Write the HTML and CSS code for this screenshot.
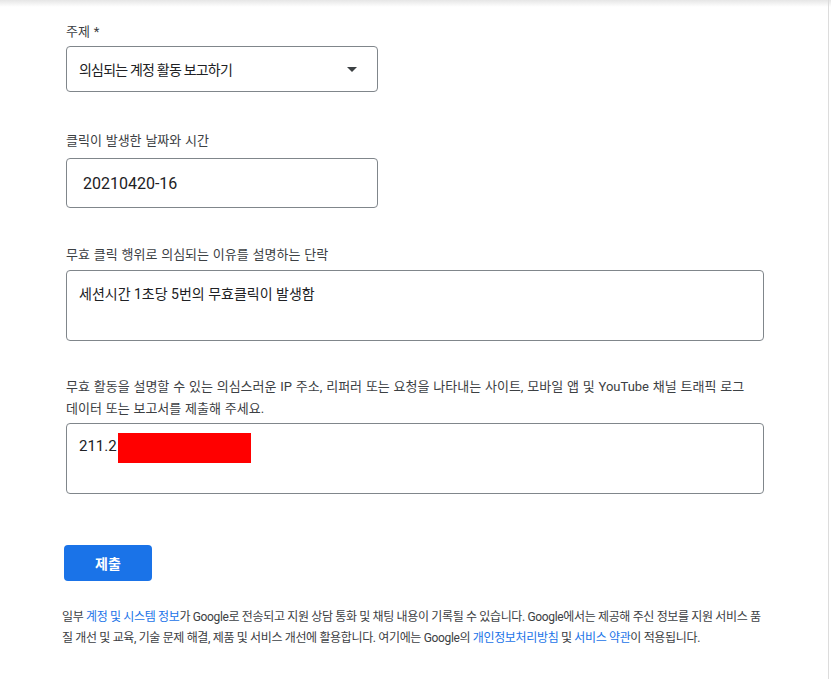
FILE: index.html
```html
<!DOCTYPE html>
<html lang="ko">
<head>
<meta charset="utf-8">
<link rel="stylesheet" href="styles.css">
</head>
<body>
<div class="page">
  <form class="form">
    <div class="field f1">
      <div class="label">주제 *</div>
      <div class="box select">
        <span>의심되는 계정 활동 보고하기</span>
        <svg class="arrow" width="10" height="5" viewBox="0 0 10 5"><path d="M0 0h10L5 5z" fill="#3c4043"/></svg>
      </div>
    </div>
    <div class="field f2">
      <div class="label">클릭이 발생한 날짜와 시간</div>
      <div class="box input">20210420-16</div>
    </div>
    <div class="field f3">
      <div class="label">무효 클릭 행위로 의심되는 이유를 설명하는 단락</div>
      <div class="box area">세션시간 1초당 5번의 무효클릭이 발생함</div>
    </div>
    <div class="field f4">
      <div class="label">무효 활동을 설명할 수 있는 의심스러운 IP 주소, 리퍼러 또는 요청을 나타내는 사이트, 모바일 앱 및 YouTube 채널 트래픽 로그<br>데이터 또는 보고서를 제출해 주세요.</div>
      <div class="box area area2"><span class="ip">211.2</span><span class="redact"></span></div>
    </div>
    <button type="button" class="submit">제출</button>
    <p class="footer">일부 <a>계정 및 시스템 정보</a>가 Google로 전송되고 지원 상담 통화 및 채팅 내용이 기록될 수 있습니다. Google에서는 제공해 주신 정보를 지원 서비스 품<br>질 개선 및 교육, 기술 문제 해결, 제품 및 서비스 개선에 활용합니다. 여기에는 Google의 <a>개인정보처리방침</a> 및 <a>서비스 약관</a>이 적용됩니다.</p>
  </form>
</div>
</body>
</html>
```
FILE: styles.css
```css
html, body { margin: 0; padding: 0; }
body {
  background: #fff linear-gradient(#e6e6e6, #ffffff 7px) no-repeat;
  font-family: Roboto, "Noto Sans CJK KR", sans-serif;
  color: #3c4043;
}
.page {
  width: 829px;
  height: 679px;
  border-right: 1px solid #dcdcdc;
  box-sizing: border-box;
}
.form {
  padding: 21px 0 0 66px;
  width: 698px;
}
.label {
  font-size: 13px;
  line-height: 22px;
  color: #3c4043;
  word-spacing: 0.6px;
  white-space: nowrap;
}
.box {
  border: 1px solid #80868b;
  border-radius: 4px;
  box-sizing: border-box;
  font-size: 14px;
  color: #202124;
}
.f1 .label { margin-bottom: 3px; }
.select {
  width: 312px;
  height: 46px;
  display: flex;
  align-items: center;
  justify-content: space-between;
  padding: 0 20px 0 12px;
  letter-spacing: -0.8px;
}
.f2 { margin-top: 38px; }
.f2 .label { margin-bottom: 6px; }
.input {
  width: 312px;
  height: 50px;
  display: flex;
  align-items: center;
  padding-left: 16px;
  font-size: 16px;
}
.f3 { margin-top: 36px; }
.f3 .label { margin-bottom: 4px; }
.area {
  width: 698px;
  height: 71px;
  padding: 12px 12px;
  line-height: 22px;
}
.f4 { margin-top: 35px; }
.f4 .label { margin-bottom: 3px; }
.area2 { display: flex; align-items: flex-start; padding-top: 11px; }
.ip { font-size: 15px; }
.redact {
  display: inline-block;
  width: 133px;
  height: 30px;
  margin-top: -2px;
  margin-left: 1px;
  background: #ff0000;
}
.submit {
  display: block;
  margin: 51px 0 0 -2px;
  width: 88px;
  height: 36px;
  border: 0;
  border-radius: 4px;
  background: #1a73e8;
  color: #fff;
  font-family: Roboto, "Noto Sans CJK KR", sans-serif;
  font-size: 14px;
  font-weight: 700;
}
.footer {
  margin: 26px 0 0 -4px;
  width: 710px;
  font-size: 12px;
  line-height: 21px;
  color: #3c4043;
  letter-spacing: -0.35px;
  white-space: nowrap;
}
.footer a { color: #1a73e8; text-decoration: none; }
```
